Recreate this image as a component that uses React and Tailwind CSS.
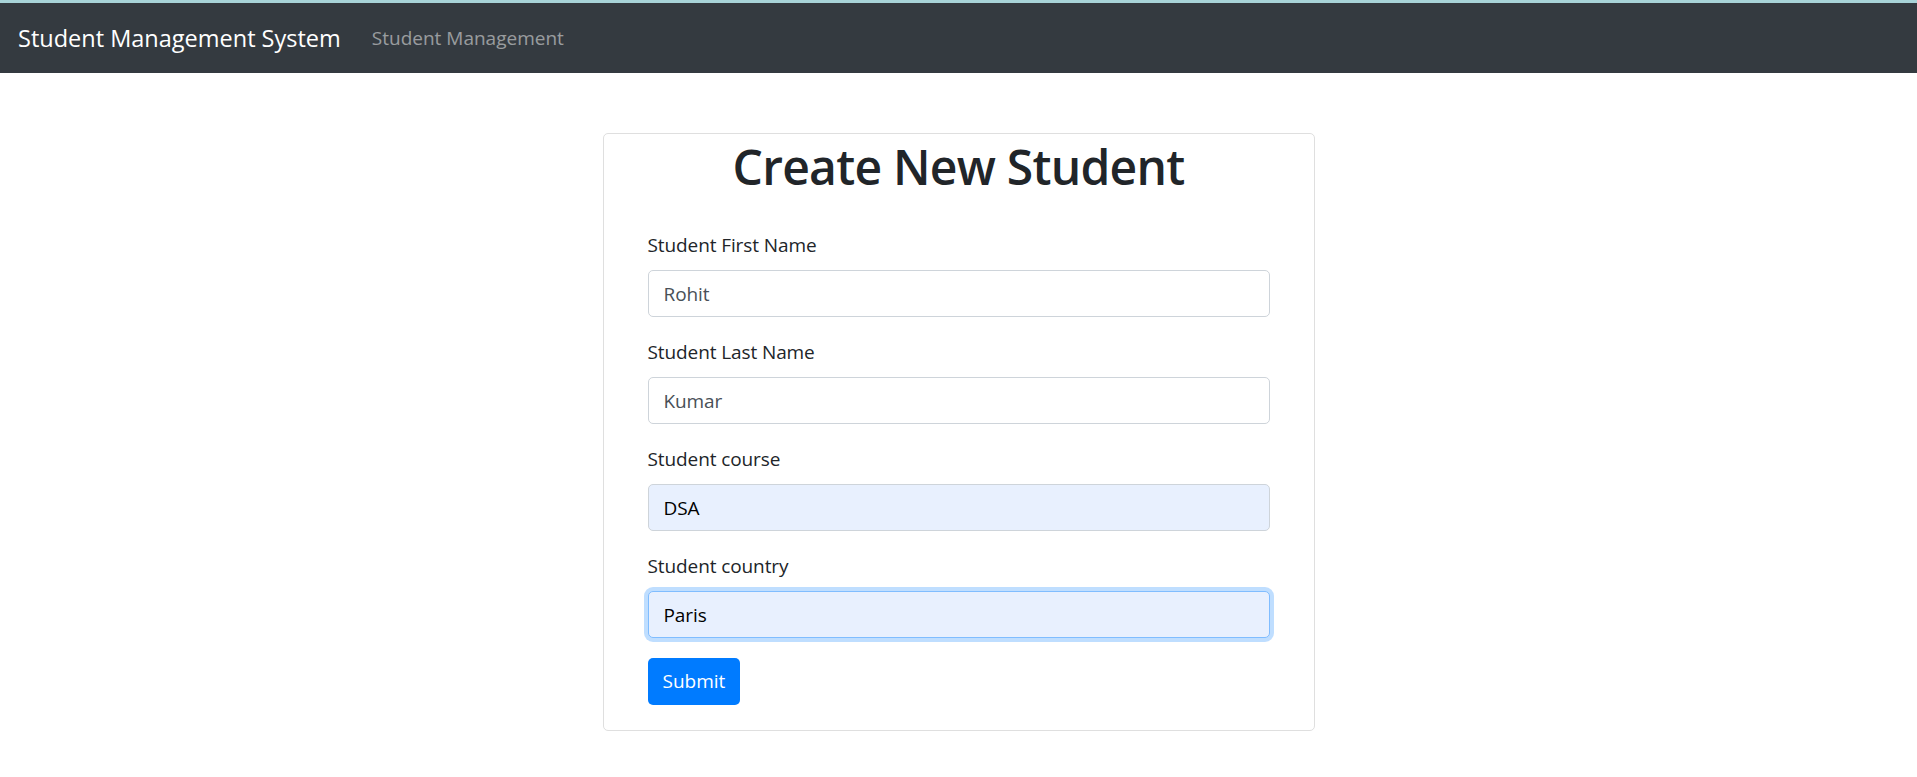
import { useState } from 'react'

const FIELDS = [
  { id: 'firstName', label: 'Student First Name', value: 'Rohit', autofill: false, focus: false },
  { id: 'lastName', label: 'Student Last Name', value: 'Kumar', autofill: false, focus: false },
  { id: 'course', label: 'Student course', value: 'DSA', autofill: true, focus: false },
  { id: 'country', label: 'Student country', value: 'Paris', autofill: true, focus: true },
]

function Field({ field, value, onChange }) {
  // autofilled inputs get chrome's pale blue fill, the focused one also gets the bootstrap glow
  let cls = 'h-[47px] w-full rounded-[5px] border px-[15px] text-[19px] tracking-[-0.1px] outline-none '
  if (field.focus) {
    cls += 'border-[#80bdff] bg-[#e8f0fe] text-black shadow-[0_0_0_4px_rgba(0,123,255,0.25)]'
  } else if (field.autofill) {
    cls += 'border-[#ced4da] bg-[#e8f0fe] text-black'
  } else {
    cls += 'border-[#ced4da] bg-white text-[#495057]'
  }

  return (
    <div className="mb-5">
      <label
        htmlFor={field.id}
        className="mb-[10px] block text-[19px] leading-[30px] tracking-[-0.1px] text-[#212529]"
      >
        {field.label}
      </label>
      <input id={field.id} className={cls} value={value} onChange={(e) => onChange(field.id, e.target.value)} />
    </div>
  )
}

export default function App() {
  const [values, setValues] = useState(() => Object.fromEntries(FIELDS.map((f) => [f.id, f.value])))

  function handleChange(id, v) {
    setValues((prev) => ({ ...prev, [id]: v }))
  }

  return (
    <div className="min-h-screen bg-white font-['Open_Sans',sans-serif]">
      <div className="h-[3px] bg-[#a8d3d8]" />
      <nav className="flex h-[70px] items-center bg-[#343a40] px-[18px]">
        <span className="text-[23.5px] leading-[37px] text-white">Student Management System</span>
        <a href="#" className="ml-[31px] text-[19px] text-[rgba(255,255,255,0.5)]">
          Student Management
        </a>
      </nav>

      <div className="mx-auto mt-[60px] w-[712px] rounded-[5px] border border-[#dfdfdf] px-[44px] pt-[3px] pb-[25px]">
        <h1 className="text-center text-[48px] leading-[60px] font-semibold tracking-[-0.75px] text-[#212529]">
          Create New Student
        </h1>
        <form className="mt-[33px]" onSubmit={(e) => e.preventDefault()}>
          {FIELDS.map((f) => (
            <Field key={f.id} field={f} value={values[f.id]} onChange={handleChange} />
          ))}
          <button type="submit" className="h-[47px] rounded-[5px] bg-[#007bff] px-[15px] text-[19px] text-white">
            Submit
          </button>
        </form>
      </div>
    </div>
  )
}
